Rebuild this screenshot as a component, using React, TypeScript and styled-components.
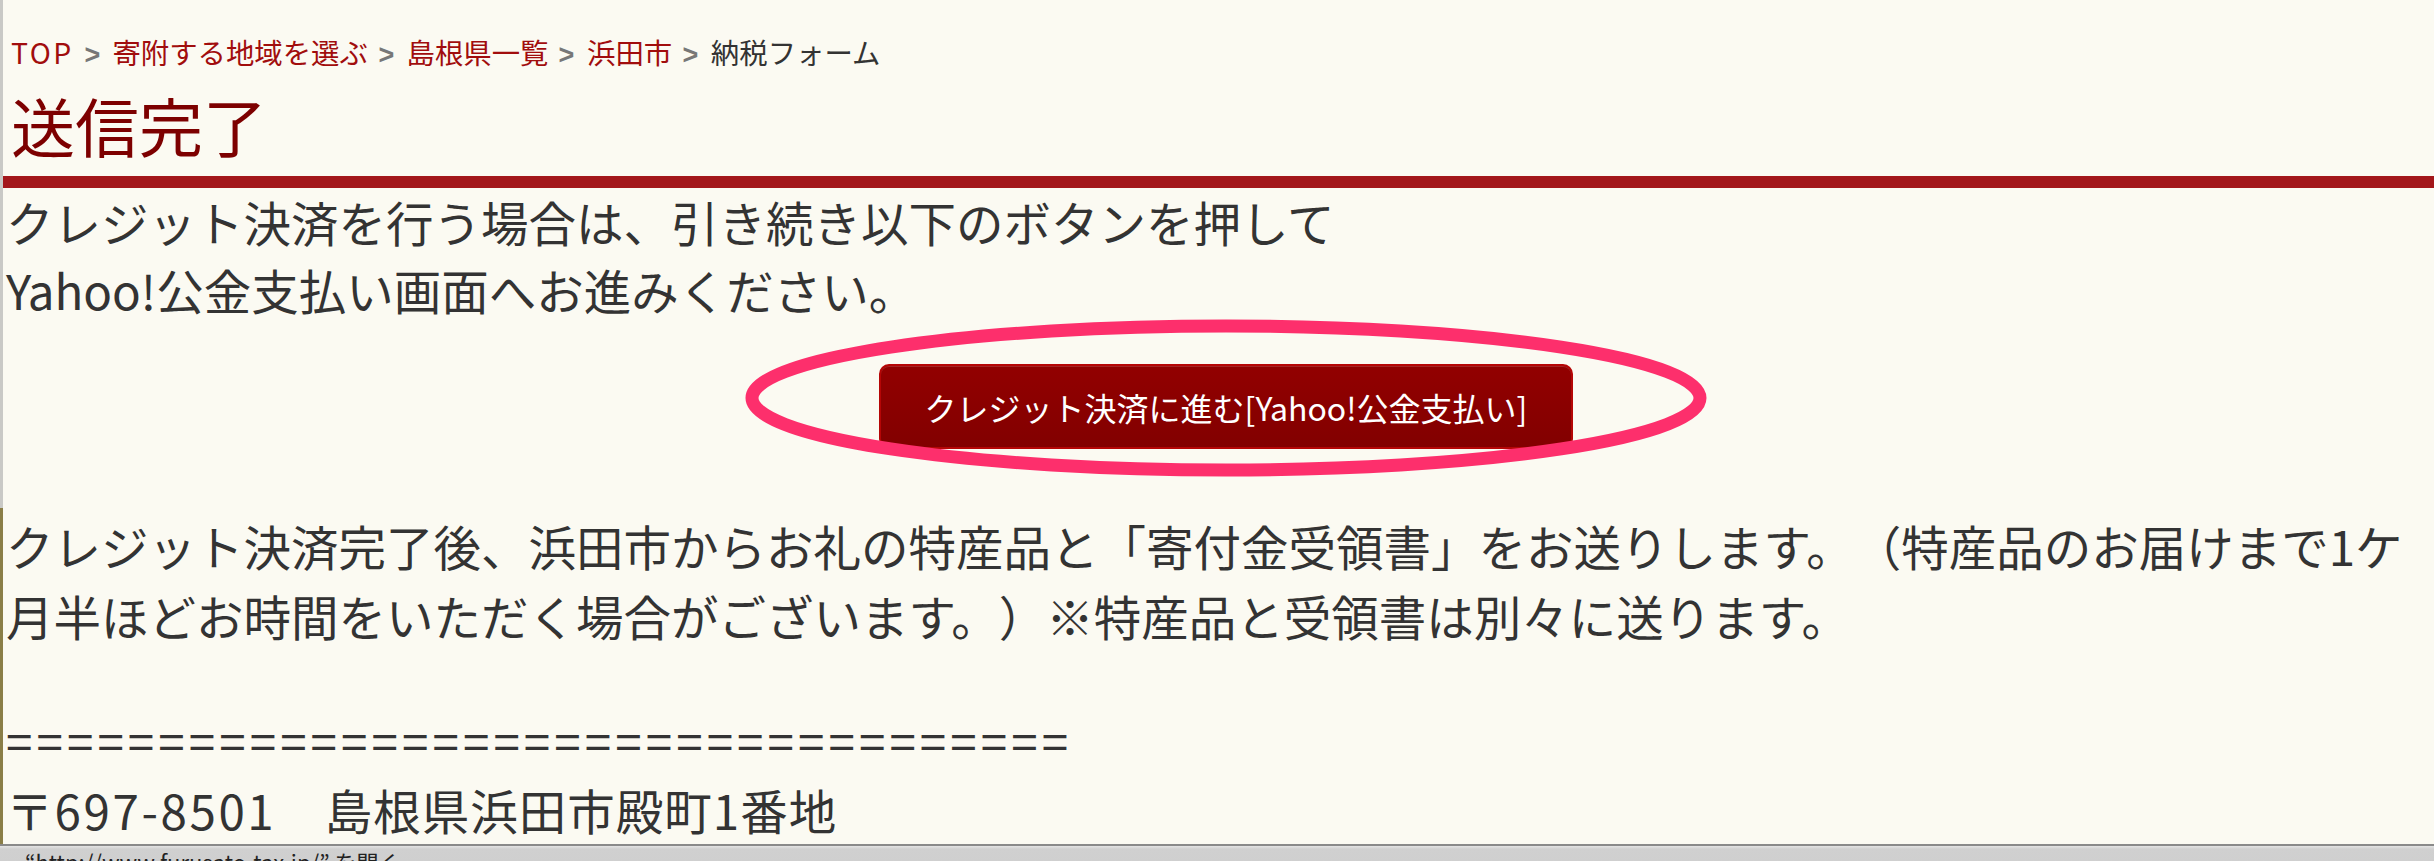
import React from "react";
import styled, { createGlobalStyle } from "styled-components";

const GlobalStyle = createGlobalStyle`
  html, body {
    margin: 0;
    padding: 0;
    background: #fbfaf2;
  }
  body {
    font-family: "Noto Sans CJK JP", "Noto Sans", sans-serif;
    color: #333;
    overflow: hidden;
    text-spacing-trim: space-all;
  }
`;

const Page = styled.div`
  min-height: 100vh;
  box-sizing: border-box;
  border-left: 3px solid;
  border-image: linear-gradient(to bottom, #c9c9c6 0%, #c9c9c6 59%, #8a7e47 59%, #8a7e47 100%) 1;
`;

const Header = styled.header`
  padding: 32px 8px 0;
`;

const Breadcrumb = styled.nav`
  font-size: 28.4px;
  line-height: 40px;
  color: #333;
  white-space: nowrap;
`;

const Crumb = styled.a<{ $latin?: boolean }>`
  color: #a10d0d;
  text-decoration: none;
  letter-spacing: ${(p) => (p.$latin ? "2.5px" : "0")};
`;

const Sep = styled.span`
  display: inline-block;
  margin: 0 12px 0 10px;
  color: #777;
  font-family: "Liberation Sans", sans-serif;
  font-weight: bold;
  transform: scaleX(0.95);
`;

const Title = styled.h1`
  margin: 10px 0 0;
  font-size: 64px;
  line-height: 80px;
  font-weight: normal;
  color: #7d0000;
`;

const Rule = styled.div`
  height: 12px;
  margin-top: 12px;
  background: #a3171b;
`;

const Content = styled.main`
  padding: 0 0 0 3px;
  font-size: 47.5px;
`;

const Text = styled.p<{ $gap?: number }>`
  margin: ${(p) => p.$gap ?? 0}px 0 0;
  line-height: 70px;
`;

const Lead = styled(Text)`
  line-height: 68px;
`;

const Divider = styled(Text)`
  letter-spacing: 4.1px;
  white-space: nowrap;
`;

const Address = styled(Text)`
  letter-spacing: 1px;
`;

const Digits = styled.span`
  letter-spacing: 2.6px;
`;

const ButtonRow = styled.div`
  margin-top: 40px;
  text-align: center;
  line-height: 0;
`;

const ButtonWrap = styled.span`
  position: relative;
  display: inline-block;
  margin-left: 12px;
`;

const PayButton = styled.button`
  width: 694px;
  height: 85px;
  border: 2px solid #b50606;
  border-radius: 10px;
  background: linear-gradient(to bottom, #920000, #820000);
  color: #fff;
  font-family: "Noto Sans CJK JP", "Noto Sans", sans-serif;
  font-size: 32px;
  cursor: pointer;
  box-shadow: inset 0 1px 0 rgba(255, 255, 255, 0.15);
`;

const Circle = styled.svg`
  position: absolute;
  left: -134px;
  top: -45px;
  pointer-events: none;
`;

const StatusBar = styled.div`
  position: fixed;
  left: 0;
  right: 0;
  bottom: 0;
  height: 15px;
  border-top: 2px solid #8a8a8a;
  background: linear-gradient(to bottom, #e4e4e4, #d0d0d0 20%, #cfcfcf);
  overflow: hidden;
  font-size: 22px;
  line-height: 22px;
  color: #222;
`;

const StatusText = styled.span`
  display: block;
  padding: 4px 0 0 25px;
`;

const crumbs = ["TOP", "寄附する地域を選ぶ", "島根県一覧", "浜田市"];

export default function App() {
  return (
    <Page>
      <GlobalStyle />
      <Header>
        <Breadcrumb>
          {crumbs.map((c) => (
            <React.Fragment key={c}>
              <Crumb href="#" $latin={c === "TOP"}>
                {c}
              </Crumb>
              <Sep>&gt;</Sep>
            </React.Fragment>
          ))}
          納税フォーム
        </Breadcrumb>
        <Title>送信完了</Title>
      </Header>
      <Rule />

      <Content>
        <Lead>
          クレジット決済を行う場合は、引き続き以下のボタンを押して
          <br />
          Yahoo!公金支払い画面へお進みください。
        </Lead>

        <ButtonRow>
          <ButtonWrap>
            <PayButton>クレジット決済に進む[Yahoo!公金支払い]</PayButton>
            {/* hand-drawn highlight */}
            <Circle width="962" height="158" viewBox="0 0 962 158">
              <ellipse
                cx="481"
                cy="79"
                rx="474"
                ry="72"
                fill="none"
                stroke="#fd2f6c"
                strokeWidth="13"
              />
            </Circle>
          </ButtonWrap>
        </ButtonRow>

        <Text $gap={62}>
          クレジット決済完了後、浜田市からお礼の特産品と「寄付金受領書」をお送りします。（特産品のお届けまで1ケ月半ほどお時間をいただく場合がございます。）※特産品と受領書は別々に送ります。
        </Text>

        <Divider $gap={54}>===================================</Divider>
        <Address>
          〒<Digits>697-8501</Digits>　島根県浜田市殿町1番地
        </Address>
      </Content>

      <StatusBar>
        <StatusText>“http://www.furusato-tax.jp/” を開く</StatusText>
      </StatusBar>
    </Page>
  );
}
